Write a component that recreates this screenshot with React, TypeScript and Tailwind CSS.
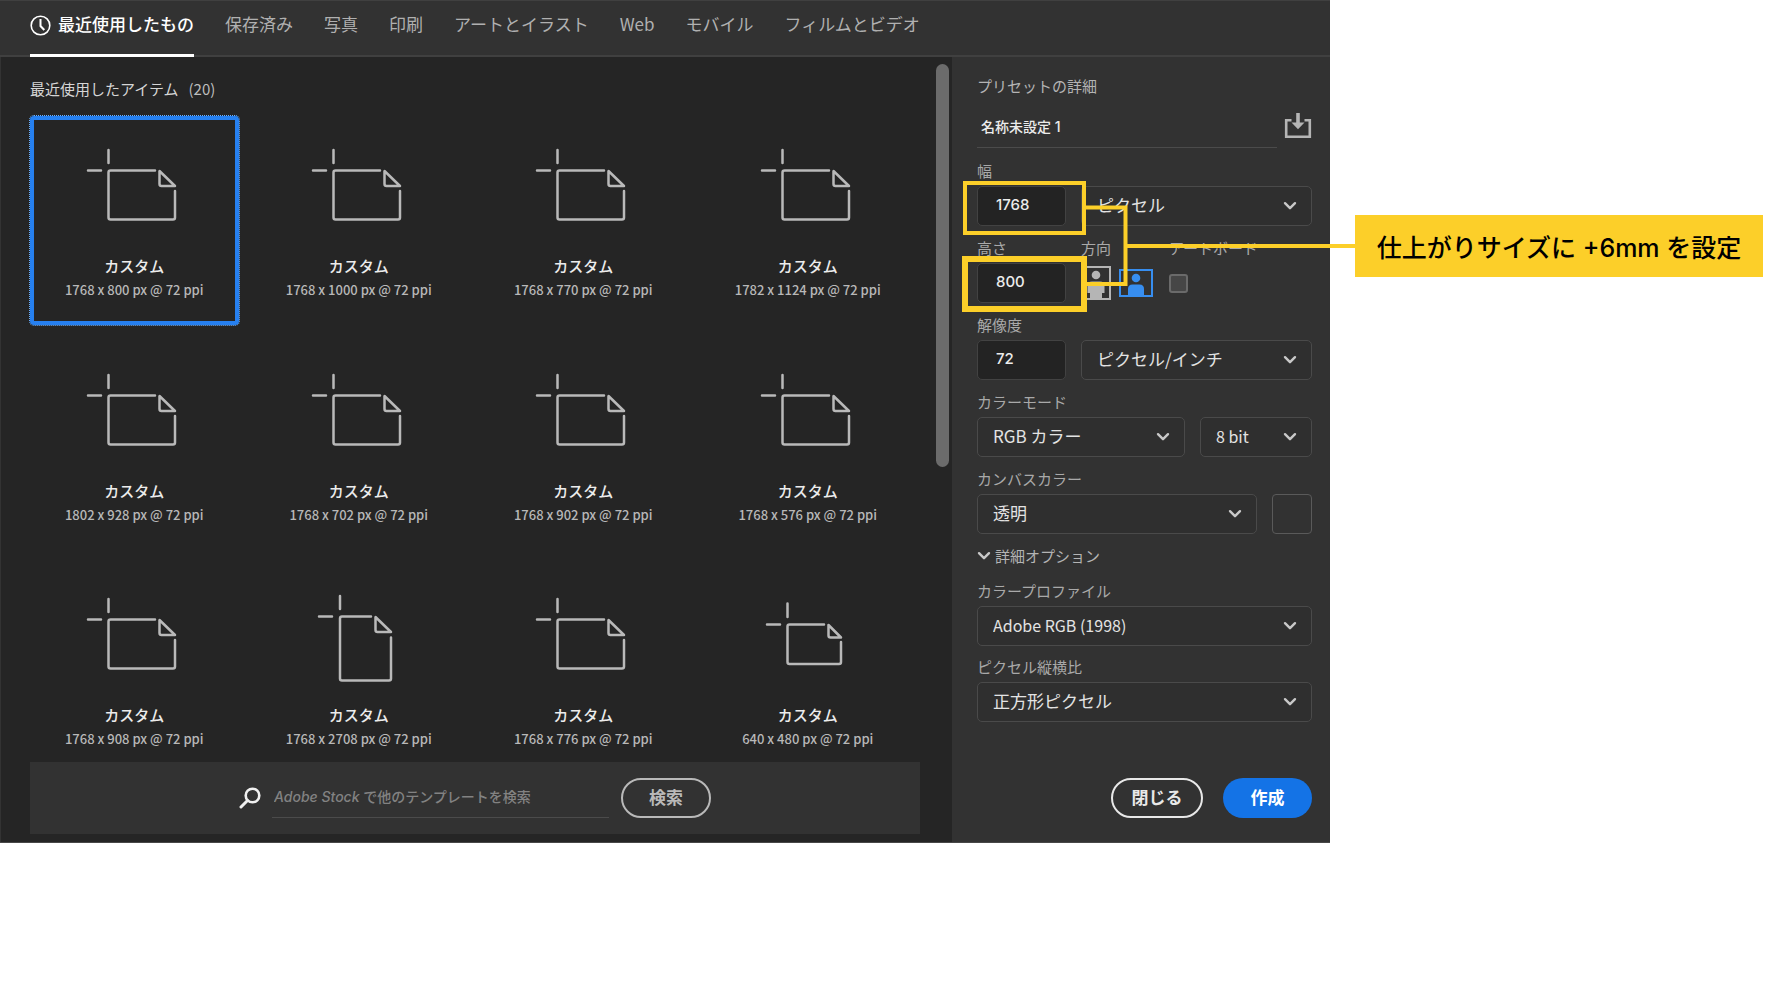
import { useState, type ReactNode } from "react";
import clsx from "clsx";

type DocShape = "landscape" | "portrait" | "small";

const TABS = ["保存済み", "写真", "印刷", "アートとイラスト", "Web", "モバイル", "フィルムとビデオ"];

const PRESETS: { size: string; shape: DocShape }[] = [
  { size: "1768 x 800", shape: "landscape" },
  { size: "1768 x 1000", shape: "landscape" },
  { size: "1768 x 770", shape: "landscape" },
  { size: "1782 x 1124", shape: "landscape" },
  { size: "1802 x 928", shape: "landscape" },
  { size: "1768 x 702", shape: "landscape" },
  { size: "1768 x 902", shape: "landscape" },
  { size: "1768 x 576", shape: "landscape" },
  { size: "1768 x 908", shape: "landscape" },
  { size: "1768 x 2708", shape: "portrait" },
  { size: "1768 x 776", shape: "landscape" },
  { size: "640 x 480", shape: "small" },
];

const DOC_PATHS: Record<DocShape, string> = {
  landscape:
    "M22.5 6V19M2 26.5H15M69 26.5H24.5a2 2 0 0 0-2 2V73.5a2 2 0 0 0 2 2H87a2 2 0 0 0 2-2V47M73.5 27V40a2 2 0 0 0 2 2H89Z",
  portrait:
    "M29 3V16M8 23.5H21M60 23.5H31a2 2 0 0 0-2 2V85.5a2 2 0 0 0 2 2H78a2 2 0 0 0 2-2V44.5M64.5 24V37a2 2 0 0 0 2 2H80Z",
  small:
    "M27.5 10.5V24M7 31.5H20M64 31.5H29.5a2 2 0 0 0-2 2V69a2 2 0 0 0 2 2H79a2 2 0 0 0 2-2V49M68.5 32V42.5a2 2 0 0 0 2 2H81Z",
};

function DocIcon({ shape }: { shape: DocShape }) {
  return (
    <svg width="96" height="92" viewBox="0 0 96 92" fill="none" stroke="#b9b9b9" strokeWidth="2.5" strokeLinecap="round" strokeLinejoin="round">
      <path d={DOC_PATHS[shape]} />
    </svg>
  );
}

function ChevronIcon({ className }: { className?: string }) {
  return (
    <svg width="14" height="10" viewBox="0 0 14 10" fill="none" stroke="#c8c8c8" strokeWidth="2.4" strokeLinecap="round" strokeLinejoin="round" className={className}>
      <path d="M2 2.2l5 5 5-5" />
    </svg>
  );
}

function PresetCard({ size, shape, selected, onSelect }: { size: string; shape: DocShape; selected: boolean; onSelect: () => void }) {
  return (
    <button
      type="button"
      onClick={onSelect}
      className={clsx(
        "aspect-square rounded-[4px] border-4 flex flex-col items-center pt-6",
        selected ? "border-[#2680f0] outline-1 outline-dotted outline-[#6bb0ff]" : "border-transparent"
      )}
    >
      <DocIcon shape={shape} />
      <span className="mt-5 text-[15px] leading-5 font-medium text-[#ececec]">カスタム</span>
      <span className="mt-1 text-[13px] leading-5 font-medium text-[#b8b8b8] whitespace-nowrap">{size} px @ 72 ppi</span>
    </button>
  );
}

function Label({ htmlFor, children }: { htmlFor: string; children: ReactNode }) {
  return (
    <label htmlFor={htmlFor} className="block text-[15px] leading-5 text-[#a9a9a9] whitespace-nowrap">
      {children}
    </label>
  );
}

function SelectBox({ id, label, value, latin, className }: { id: string; label?: string; value: string; latin?: boolean; className?: string }) {
  return (
    <div className={clsx("grid items-center", className)}>
      <select
        id={id}
        aria-label={label}
        className={clsx(
          "[grid-area:1/1] w-full h-10 appearance-none rounded-[5px] border border-[#4a4a4a] bg-[#2f2f2f] pl-[15px] pr-9 pb-[3px] text-[#e3e3e3]",
          latin ? "text-[16px]" : "text-[17px]"
        )}
      >
        <option>{value}</option>
      </select>
      <ChevronIcon className="[grid-area:1/1] justify-self-end mr-[15px] pointer-events-none" />
    </div>
  );
}

function NumberBox({ id, value }: { id: string; value: string }) {
  return (
    <input
      id={id}
      type="text"
      defaultValue={value}
      className="w-[89px] h-10 shrink-0 rounded-[5px] border border-[#424242] bg-[#232323] pl-[18px] pr-2 pb-[3px] font-['Inter',sans-serif] text-[15px] font-medium text-[#ececec]"
    />
  );
}

// Yellow frames round the width and height boxes, and the line to the callout
function Annotation() {
  return (
    <svg width="403" height="270" viewBox="0 0 403 270" fill="none" stroke="#fccf29" className="absolute left-0 top-0 overflow-visible pointer-events-none">
      <rect x="13" y="126" width="119" height="50" strokeWidth="4" />
      <rect x="13" y="202" width="119" height="50" strokeWidth="6" />
      <path d="M134 150.5H173.5V227H135M173.5 189H403" strokeWidth="4" />
    </svg>
  );
}

function DetailsPanel() {
  return (
    <aside className="relative z-10 w-[378px] shrink-0 bg-[#323232] pl-[25px] pr-[18px] pt-[19px] pb-6 flex flex-col">
      <h2 className="text-[15px] leading-5 text-[#b4b4b4]">プリセットの詳細</h2>

      <div className="mt-2 flex items-center justify-between">
        <input
          type="text"
          aria-label="名称"
          defaultValue="名称未設定 1"
          className="w-[300px] h-11 border-b border-[#4b4b4b] bg-transparent px-1 font-['Inter','Noto_Sans_CJK_JP',sans-serif] text-[14px] font-medium text-[#ececec]"
        />
        <button type="button" aria-label="プリセットを保存">
          <svg width="28" height="28" viewBox="0 0 28 28">
            <path d="M7.5 8.2H2.2V24.8H25.8V8.2H20.5" fill="none" stroke="#b5b5b5" strokeWidth="2.6" />
            <path d="M12.2 1h3.6v9.5h4.7L14 17.2 7.5 10.5h4.7z" fill="#b5b5b5" />
          </svg>
        </button>
      </div>

      <div className="mt-[13px] flex flex-col gap-3">
        <div>
          <Label htmlFor="width">幅</Label>
          <div className="mt-[5px] flex gap-[15px]">
            <NumberBox id="width" value="1768" />
            <SelectBox id="unit" label="単位" value="ピクセル" className="flex-1" />
          </div>
        </div>

        <div className="flex gap-[15px]">
          <div className="w-[89px]">
            <Label htmlFor="height">高さ</Label>
            <div className="mt-[5px]">
              <NumberBox id="height" value="800" />
            </div>
          </div>
          <div className="w-[73px]">
            <span className="block text-[15px] leading-5 text-[#a9a9a9]">方向</span>
            <div className="mt-[5px] h-10 flex items-center gap-2">
              <button type="button" aria-label="縦向き">
                <svg width="30" height="34" viewBox="0 0 30 34">
                  <rect x="1" y="1" width="28" height="32" fill="none" stroke="#b5b5b5" strokeWidth="2" />
                  <circle cx="15" cy="9" r="4.3" fill="#b5b5b5" />
                  <path d="M6.5 20q0-4.5 4.5-4.5h8q4.5 0 4.5 4.5v7h-2.5v5h-12v-5h-2.5z" fill="#b5b5b5" />
                </svg>
              </button>
              <button type="button" aria-label="横向き">
                <svg width="34" height="28" viewBox="0 0 34 28">
                  <rect x="1" y="1" width="32" height="26" fill="none" stroke="#378ef0" strokeWidth="2" />
                  <circle cx="17" cy="9" r="4.3" fill="#378ef0" />
                  <path d="M9 26v-6q0-4.5 4.5-4.5h7q4.5 0 4.5 4.5v6z" fill="#378ef0" />
                </svg>
              </button>
            </div>
          </div>
          <div>
            <Label htmlFor="artboard">アートボード</Label>
            <div className="mt-[5px] h-10 flex items-center">
              <input id="artboard" type="checkbox" className="appearance-none size-[19px] rounded-[3px] border-2 border-[#6a6a6a] bg-[#464646]" />
            </div>
          </div>
        </div>

        <div>
          <Label htmlFor="resolution">解像度</Label>
          <div className="mt-[5px] flex gap-[15px]">
            <NumberBox id="resolution" value="72" />
            <SelectBox id="resolution-unit" label="解像度の単位" value="ピクセル/インチ" className="flex-1" />
          </div>
        </div>

        <div>
          <Label htmlFor="color-mode">カラーモード</Label>
          <div className="mt-[5px] flex gap-[15px]">
            <SelectBox id="color-mode" value="RGB カラー" className="flex-1" />
            <SelectBox id="depth" label="ビット数" value="8 bit" latin className="w-28" />
          </div>
        </div>

        <div>
          <Label htmlFor="canvas-color">カンバスカラー</Label>
          <div className="mt-[5px] flex gap-[15px]">
            <SelectBox id="canvas-color" value="透明" className="flex-1" />
            <button type="button" aria-label="カラーを選択" className="size-10 rounded-[4px] border border-[#5a5a5a] bg-[#323232]" />
          </div>
        </div>

        <button type="button" className="flex items-center gap-1 text-[15px] leading-5 text-[#b4b4b4]">
          <ChevronIcon />
          詳細オプション
        </button>
      </div>

      <div className="mt-[15px] flex flex-col gap-[11px]">
        <div>
          <Label htmlFor="profile">カラープロファイル</Label>
          <SelectBox id="profile" value="Adobe RGB (1998)" latin className="mt-[5px]" />
        </div>
        <div>
          <Label htmlFor="aspect">ピクセル縦横比</Label>
          <SelectBox id="aspect" value="正方形ピクセル" className="mt-[5px]" />
        </div>
      </div>

      <div className="mt-auto flex justify-end gap-5">
        <button type="button" className="w-[92px] h-10 rounded-full border-2 border-[#e8e8e8] pb-[2px] text-[17px] font-bold text-[#e8e8e8]">閉じる</button>
        <button type="button" className="w-[89px] h-10 rounded-full bg-[#1473e6] pb-[2px] text-[17px] font-bold text-white">作成</button>
      </div>

      <Annotation />
    </aside>
  );
}

export default function App() {
  const [selected, setSelected] = useState(0);

  return (
    <div className="min-h-screen bg-white flex items-start font-['Noto_Sans_CJK_JP',sans-serif]">
      <main className="flex-1 min-w-0 bg-[#252525] border-b border-[#484848]">
        {/* カテゴリタブ */}
        <nav className="h-[57px] px-[30px] flex gap-[31px] border-t border-t-[#404040] border-b-2 border-b-[#404040] bg-[#323232] text-[17px] leading-6 whitespace-nowrap">
          <a href="#recent" className="flex gap-[7px] pt-[11px] h-14 border-b-3 border-white text-white font-medium">
            <svg width="21" height="21" viewBox="0 0 21 21" fill="none" stroke="white" strokeWidth="1.6" className="mt-[3px]">
              <circle cx="10.5" cy="10.5" r="9.3" />
              <path d="M10.5 4v7l3.8 4" strokeWidth="2" />
            </svg>
            最近使用したもの
          </a>
          {TABS.map((tab) => (
            <a key={tab} href="#tab" className="pt-[11px] text-[#b0b0b0]">
              {tab}
            </a>
          ))}
        </nav>

        <div className="flex">
          {/* 最近使用したアイテム */}
          <section className="flex-1 min-w-0 pb-2 border-l border-[#333333]">
            <div className="h-[705px] overflow-hidden flex pr-[3px]">
              <div className="flex-1 pl-[29px] pr-6 pt-[22px]">
                <h1 className="text-[15px] leading-5 text-[#d6d6d6] flex gap-[10px]">
                  最近使用したアイテム
                  <span className="text-[#bdbdbd]">(20)</span>
                </h1>
                <div className="mt-[17px] grid grid-cols-4 gap-4">
                  {PRESETS.map((p, i) => (
                    <PresetCard key={p.size} {...p} selected={i === selected} onSelect={() => setSelected(i)} />
                  ))}
                </div>
              </div>
              <div className="mt-[7px] w-[13px] h-[403px] rounded-full bg-[#6b6b6b]" />
            </div>

            <form className="ml-[29px] mr-8 h-[72px] bg-[#323232] flex items-center justify-center">
              <svg width="22" height="22" viewBox="0 0 22 22" fill="none" stroke="#f0f0f0" strokeLinecap="round">
                <circle cx="13.5" cy="8.5" r="6.8" strokeWidth="2.6" />
                <path d="M8.5 13.5L2 20" strokeWidth="3" />
              </svg>
              <input
                type="text"
                aria-label="テンプレートを検索"
                placeholder="Adobe Stock で他のテンプレートを検索"
                className="ml-[11px] w-[337px] h-10 border-b border-[#4b4b4b] bg-transparent px-[2px] pb-[3px] font-['Inter','Noto_Sans_CJK_JP',sans-serif] italic [font-synthesis:none] text-[14px] font-medium placeholder:text-[#828282]"
              />
              <button type="button" className="ml-3 w-[90px] h-10 rounded-full border-2 border-[#b9b9b9] pb-[2px] text-[17px] font-bold text-[#b9b9b9]">
                検索
              </button>
            </form>
          </section>

          <DetailsPanel />
        </div>
      </main>

      <div className="w-[438px] shrink-0 pl-[25px] pr-[5px] pt-[215px]">
        <p className="h-[62px] pt-[6px] flex items-center justify-center bg-[#fccf29] font-['Inter','Noto_Sans_CJK_JP',sans-serif] text-[25px] font-medium text-black whitespace-pre">
          仕上がりサイズに +6mm を設定
        </p>
      </div>
    </div>
  );
}
